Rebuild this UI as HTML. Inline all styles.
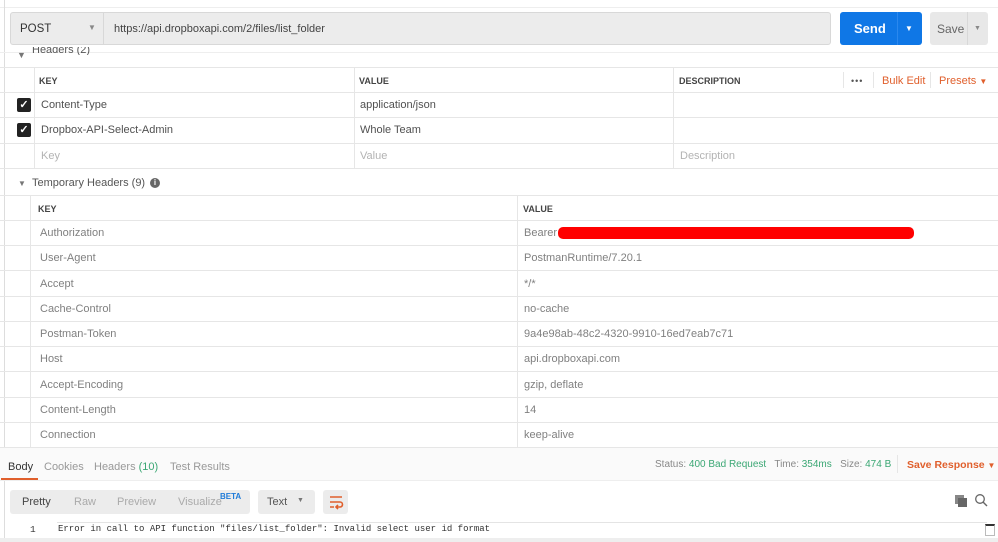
<!DOCTYPE html>
<html><head><style>
*{box-sizing:border-box;margin:0;padding:0}
body{width:998px;height:542px;overflow:hidden;background:#fff;font-family:"Liberation Sans",sans-serif;font-size:11px;color:#505050;position:relative}
.a{position:absolute}
.hl{position:absolute;height:1px;background:#e6e6e6}
.vl{position:absolute;width:1px;background:#e6e6e6}
.th{font-size:9px;font-weight:bold;color:#444}
.g{color:#808080}
.ph{color:#b3b3b3}
.cb{position:absolute;width:14px;height:14px;background:#222;border-radius:2px;color:#fff;font-size:11px;line-height:14px;text-align:center;font-weight:bold}
.or{color:#e05f2c}
</style></head><body>
<div class="a" style="left:0;top:0;width:998px;height:8px;border-bottom:1px solid #eee"></div>
<div class="vl" style="left:4px;top:0;height:542px;background:#ddd"></div>
<!-- top bar -->
<div class="a" style="left:10px;top:12px;width:821px;height:33px;background:#ececec;border:1px solid #d8d8d8;border-radius:3px"></div>
<div class="vl" style="left:103px;top:13px;height:31px;background:#d8d8d8"></div>
<div class="a" style="left:20px;top:23px;font-size:11.5px;color:#333">POST</div>
<div class="a" style="left:88px;top:23px;font-size:8px;color:#888">▼</div>
<div class="a" style="left:114px;top:23px;font-size:11px;color:#444">https://api.dropboxapi.com/2/files/list_folder</div>
<div class="a" style="left:840px;top:12px;width:82px;height:33px;background:#0f77e6;border-radius:3px"></div>
<div class="vl" style="left:897px;top:12px;height:33px;background:#2b88ee"></div>
<div class="a" style="left:854px;top:21px;font-size:13px;font-weight:bold;color:#fff">Send</div>
<div class="a" style="left:905px;top:24px;font-size:8px;color:#fff">▼</div>
<div class="a" style="left:930px;top:12px;width:58px;height:33px;background:#e8e8e8;border-radius:3px"></div>
<div class="vl" style="left:967px;top:12px;height:33px;background:#d8d8d8"></div>
<div class="a" style="left:937px;top:22px;font-size:12px;color:#666">Save</div>
<div class="a" style="left:974px;top:25px;font-size:7px;color:#888">▼</div>
<div class="hl" style="left:0;top:52px;width:998px;background:#eee"></div>
<div class="a" style="left:17px;top:50px;font-size:9px;color:#777">▼</div>
<div class="a" style="left:32px;top:47px;font-size:11px;color:#555;height:8px;overflow:hidden;line-height:6px">Headers (2)</div>
<!-- headers table -->
<div class="hl" style="left:0;top:67px;width:998px"></div>
<div class="hl" style="left:0;top:92px;width:998px"></div>
<div class="hl" style="left:0;top:117px;width:998px"></div>
<div class="hl" style="left:0;top:143px;width:998px"></div>
<div class="hl" style="left:0;top:168px;width:998px"></div>
<div class="vl" style="left:34px;top:67px;height:101px"></div>
<div class="vl" style="left:354px;top:67px;height:101px"></div>
<div class="vl" style="left:673px;top:67px;height:101px"></div>
<div class="vl" style="left:843px;top:72px;height:16px"></div>
<div class="vl" style="left:873px;top:72px;height:16px"></div>
<div class="vl" style="left:930px;top:72px;height:16px"></div>
<div class="a th" style="left:39px;top:76px">KEY</div>
<div class="a th" style="left:359px;top:76px">VALUE</div>
<div class="a th" style="left:679px;top:76px">DESCRIPTION</div>
<div class="a" style="left:851px;top:76px;font-size:9px;color:#555;letter-spacing:1px">•••</div>
<div class="a or" style="left:882px;top:75px">Bulk Edit</div>
<div class="a or" style="left:939px;top:75px">Presets <span style="font-size:8px">▼</span></div>
<div class="cb" style="left:17px;top:98px">✓</div>
<div class="cb" style="left:17px;top:123px">✓</div>
<div class="a" style="left:41px;top:99px">Content-Type</div>
<div class="a" style="left:360px;top:99px">application/json</div>
<div class="a" style="left:41px;top:124px">Dropbox-API-Select-Admin</div>
<div class="a" style="left:360px;top:124px">Whole Team</div>
<div class="a ph" style="left:41px;top:150px">Key</div>
<div class="a ph" style="left:360px;top:150px">Value</div>
<div class="a ph" style="left:680px;top:150px">Description</div>
<div class="a" style="left:18px;top:179px;font-size:8px;color:#777">▼</div>
<div class="a" style="left:32px;top:177px;color:#555">Temporary Headers (9)</div>
<div class="a" style="left:150px;top:178px;width:10px;height:10px;border-radius:50%;background:#666;color:#fff;font-size:8px;line-height:10px;text-align:center;font-weight:bold">i</div>
<!-- temp table -->
<div class="hl" style="left:0;top:195px;width:998px"></div>
<div class="vl" style="left:30px;top:195px;height:253px"></div>
<div class="vl" style="left:517px;top:195px;height:253px"></div>
<div class="a th" style="left:38px;top:204px">KEY</div>
<div class="a th" style="left:523px;top:204px">VALUE</div>
<div class="hl" style="left:0;top:220px;width:998px"></div>
<div class="hl" style="left:0;top:245px;width:998px"></div>
<div class="hl" style="left:0;top:270px;width:998px"></div>
<div class="hl" style="left:0;top:296px;width:998px"></div>
<div class="hl" style="left:0;top:321px;width:998px"></div>
<div class="hl" style="left:0;top:346px;width:998px"></div>
<div class="hl" style="left:0;top:371px;width:998px"></div>
<div class="hl" style="left:0;top:397px;width:998px"></div>
<div class="hl" style="left:0;top:422px;width:998px"></div>
<div class="hl" style="left:0;top:447px;width:998px"></div>
<div class="a g" style="left:40px;top:227px">Authorization</div><div class="a g" style="left:524px;top:227px">Bearer</div>
<div class="a" style="left:558px;top:227px;width:356px;height:12px;background:#f00;border-radius:5px"></div>
<div class="a g" style="left:40px;top:252px">User-Agent</div><div class="a g" style="left:524px;top:252px">PostmanRuntime/7.20.1</div>
<div class="a g" style="left:40px;top:278px">Accept</div><div class="a g" style="left:524px;top:278px">*/*</div>
<div class="a g" style="left:40px;top:303px">Cache-Control</div><div class="a g" style="left:524px;top:303px">no-cache</div>
<div class="a g" style="left:40px;top:328px">Postman-Token</div><div class="a g" style="left:524px;top:328px">9a4e98ab-48c2-4320-9910-16ed7eab7c71</div>
<div class="a g" style="left:40px;top:353px">Host</div><div class="a g" style="left:524px;top:353px">api.dropboxapi.com</div>
<div class="a g" style="left:40px;top:379px">Accept-Encoding</div><div class="a g" style="left:524px;top:379px">gzip, deflate</div>
<div class="a g" style="left:40px;top:404px">Content-Length</div><div class="a g" style="left:524px;top:404px">14</div>
<div class="a g" style="left:40px;top:429px">Connection</div><div class="a g" style="left:524px;top:429px">keep-alive</div>
<!-- response -->
<div class="a" style="left:0;top:448px;width:998px;height:33px;background:#fafafa;border-bottom:1px solid #eee"></div>
<div class="a" style="left:8px;top:461px;color:#333">Body</div>
<div class="a" style="left:1px;top:478px;width:37px;height:2px;background:#e05f2c"></div>
<div class="a" style="left:44px;top:461px;color:#999">Cookies</div>
<div class="a" style="left:94px;top:461px;color:#999">Headers <span style="color:#3ba774">(10)</span></div>
<div class="a" style="left:170px;top:461px;color:#999">Test Results</div>
<div class="a" style="left:655px;top:459px;font-size:10px;color:#888">Status: <span style="color:#3ba774">400 Bad Request</span> &nbsp; Time: <span style="color:#3ba774">354ms</span> &nbsp; Size: <span style="color:#3ba774">474 B</span></div>
<div class="vl" style="left:897px;top:455px;height:18px"></div>
<div class="a or" style="left:907px;top:459px;font-weight:bold;font-size:10.5px">Save Response <span style="font-size:8px">▼</span></div>
<div class="a" style="left:10px;top:490px;width:240px;height:24px;background:#ececec;border-radius:3px"></div>
<div class="a" style="left:22px;top:496px;color:#444">Pretty</div>
<div class="a" style="left:74px;top:496px;color:#aaa">Raw</div>
<div class="a" style="left:117px;top:496px;color:#aaa">Preview</div>
<div class="a" style="left:178px;top:496px;color:#aaa">Visualize</div>
<div class="a" style="left:220px;top:492px;font-size:8px;font-weight:bold;color:#1f7bd8">BETA</div>
<div class="a" style="left:258px;top:490px;width:57px;height:24px;background:#ececec;border-radius:3px"></div>
<div class="a" style="left:267px;top:496px;color:#555">Text</div>
<div class="a" style="left:297px;top:497px;font-size:7px;color:#777">▼</div>
<div class="a" style="left:323px;top:490px;width:25px;height:24px;background:#ececec;border-radius:3px"></div>
<svg class="a" style="left:328px;top:494px" width="16" height="16" viewBox="0 0 16 16"><path d="M2 3h12M2 8h10a2.5 2.5 0 0 1 0 5H8M10 11l-2 2 2 2M2 13h4" stroke="#e05f2c" stroke-width="1.6" fill="none"/></svg>
<div class="a" style="left:955px;top:495px;width:9px;height:9px;background:#888"></div>
<div class="a" style="left:958px;top:498px;width:9px;height:9px;background:#666"></div>
<svg class="a" style="left:974px;top:493px" width="14" height="14" viewBox="0 0 14 14"><circle cx="6" cy="6" r="4.3" stroke="#666" stroke-width="1.3" fill="none"/><path d="M9 9l4 4" stroke="#666" stroke-width="1.4"/></svg>
<div class="hl" style="left:57px;top:522px;width:930px;background:#e4e4e4"></div>
<div class="a" style="left:30px;top:524px;font-family:'Liberation Mono',monospace;font-size:9.5px;color:#333">1</div>
<div class="a" style="left:58px;top:524px;font-family:'Liberation Mono',monospace;font-size:9px;color:#333">Error in call to API function "files/list_folder": Invalid select user id format</div>
<div class="a" style="left:985px;top:524px;width:10px;height:12px;border:1px solid #bbb;border-top:2px solid #333"></div>
<div class="a" style="left:0;top:538px;width:998px;height:4px;background:#eee"></div>
</body></html>
